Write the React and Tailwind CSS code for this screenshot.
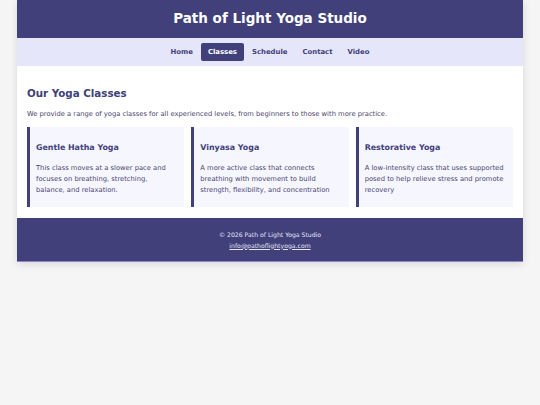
export default function App() {
  const nav = ["Home", "Classes", "Schedule", "Contact", "Video"];
  const cards = [
    ["Gentle Hatha Yoga", "This class moves at a slower pace and focuses on breathing, stretching, balance, and relaxation."],
    ["Vinyasa Yoga", "A more active class that connects breathing with movement to build strength, flexibility, and concentration"],
    ["Restorative Yoga", "A low-intensity class that uses supported posed to help relieve stress and promote recovery"],
  ];
  return (
    <div className="min-h-[405px] bg-[#f5f5f5] text-[#41407a]" style={{ fontFamily: '"DejaVu Sans", Verdana, sans-serif' }}>
      <div className="mx-[17px] bg-white shadow-[0_2px_8px_rgba(0,0,0,0.12)]">
        <header className="h-[38px] bg-[#41407a] flex items-center justify-center">
          <h1 className="text-white font-bold text-[13.5px] leading-none">Path of Light Yoga Studio</h1>
        </header>
        <nav className="h-[28px] bg-[#e6e6fa] flex items-center justify-center gap-[1px]">
          {nav.map((n) => (
            <span
              key={n}
              className={
                "text-[6.9px] font-bold px-[7px] h-[18px] flex items-center rounded-[2px] " +
                (n === "Classes" ? "bg-[#41407a] text-white" : "text-[#41407a]")
              }
            >
              {n}
            </span>
          ))}
        </nav>
        <main className="px-[10px] pt-[22px] pb-[11px]">
          <h2 className="text-[10.3px] font-bold leading-none mb-[13px]">Our Yoga Classes</h2>
          <p className="text-[6.75px] text-[#4a4470] leading-none mb-[9px]">
            We provide a range of yoga classes for all experienced levels, from beginners to those with more practice.
          </p>
          <div className="grid grid-cols-3 gap-[7px]">
            {cards.map(([t, d]) => (
              <div key={t} className="bg-[#f6f6ff] border-l-[3px] border-[#41407a] h-[80px] pl-[6px] pr-[8px] pt-[17px]">
                <h3 className="text-[7.9px] font-bold leading-none mb-[11px]">{t}</h3>
                <p className="text-[6.75px] leading-[11px] text-[#4a4470]">{d}</p>
              </div>
            ))}
          </div>
        </main>
        <footer className="h-[44px] bg-[#41407a] border-b border-[#8a86c4] flex flex-col items-center justify-center gap-[4px] pt-[2px] text-[#e6e6fa] text-[6.15px] leading-none">
          <p>© 2026 Path of Light Yoga Studio</p>
          <a className="underline">info@pathoflightyoga.com</a>
        </footer>
      </div>
    </div>
  );
}
